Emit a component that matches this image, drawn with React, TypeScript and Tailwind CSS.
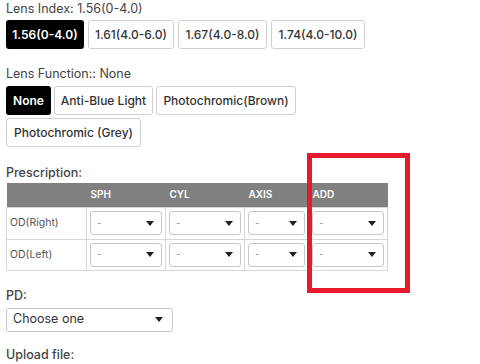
import React from 'react';

const font = { fontFamily: 'Inter, "Open Sans", sans-serif' };

const Caret = () => (
  <svg width="8" height="5" viewBox="0 0 8 5" className="shrink-0">
    <path d="M0 0 H8 L4 5 Z" fill="#222" />
  </svg>
);

const MiniSelect = () => (
  <div className="flex h-[24px] items-center justify-between rounded-[3px] border border-[#c8c8c8] bg-white pl-[6px] pr-[7px]">
    <span className="text-[10px] text-[#999]">-</span>
    <Caret />
  </div>
);

interface OptProps {
  label: string;
  active?: boolean;
  width: string;
}

const Opt: React.FC<OptProps> = ({ label, active, width }) => (
  <button
    className={`flex h-[29px] items-center justify-center whitespace-nowrap rounded-[3px] text-[12px] font-medium ${width} ${
      active ? 'bg-black text-white font-semibold' : 'border border-[#cfcfcf] bg-white text-[#333]'
    }`}
  >
    {label}
  </button>
);

const columns = [
  { name: '', w: 'w-[80px]' },
  { name: 'SPH', w: 'w-[79px]' },
  { name: 'CYL', w: 'w-[79px]' },
  { name: 'AXIS', w: 'w-[64px]' },
  { name: 'ADD', w: 'w-[79px]' },
];

export default function App() {
  return (
    <div className="relative h-[364px] w-[480px] overflow-hidden bg-white px-[6px] pt-[1px] text-[#333]" style={font}>
      <div className="h-[16px] text-[12.5px] leading-[16px] text-[#444]">Lens Index: 1.56(0-4.0)</div>
      <div className="mt-[3px] flex gap-[4px]">
        <Opt label="1.56(0-4.0)" active width="w-[78px]" />
        <Opt label="1.61(4.0-6.0)" width="w-[86px]" />
        <Opt label="1.67(4.0-8.0)" width="w-[89px]" />
        <Opt label="1.74(4.0-10.0)" width="w-[94px]" />
      </div>

      <div className="mt-[17px] h-[16px] text-[12.5px] leading-[16px] text-[#444]">Lens Function:: None</div>
      <div className="mt-[4px] flex w-[330px] flex-wrap gap-x-[3px] gap-y-[3px]">
        <Opt label="None" active width="w-[45px]" />
        <Opt label="Anti-Blue Light" width="w-[99px]" />
        <Opt label="Photochromic(Brown)" width="w-[140px]" />
        <Opt label="Photochromic (Grey)" width="w-[135px]" />
      </div>

      <div className="mt-[18px] h-[16px] text-[12.5px] font-medium leading-[16px] text-[#444]">Prescription:</div>
      <table className="mt-[2px] border-collapse">
        <thead>
          <tr className="h-[24px] bg-[#808080]">
            {columns.map((c) => (
              <th
                key={c.name || 'blank'}
                className={`${c.w} px-[4px] text-left text-[10px] font-semibold text-white`}
              >
                {c.name}
              </th>
            ))}
          </tr>
        </thead>
        <tbody>
          {['OD(Right)', 'OD(Left)'].map((row, i) => (
            <tr key={row} className={i === 0 ? 'h-[32px]' : 'h-[31px]'}>
              <td className="border border-[#d6d6d6] px-[3px] text-[10.5px] text-[#555]">{row}</td>
              {[1, 2, 3, 4].map((k) => (
                <td key={k} className="border border-[#d6d6d6] px-[3px]">
                  <MiniSelect />
                </td>
              ))}
            </tr>
          ))}
        </tbody>
      </table>

      <div className="mt-[17px] h-[16px] text-[12.5px] font-medium leading-[16px] text-[#444]">PD:</div>
      <div className="mt-[4px] flex h-[24px] w-[167px] items-center justify-between rounded-[3px] border border-[#c8c8c8] pl-[6px] pr-[9px]">
        <span className="text-[12.5px] text-[#333]">Choose one</span>
        <Caret />
      </div>

      <div className="mt-[15px] h-[16px] text-[12.5px] font-medium leading-[16px] text-[#444]">Upload file:</div>

      <div className="absolute left-[307px] top-[153px] h-[140px] w-[103px] border-[5px] border-[#e8192c]" />
    </div>
  );
}
